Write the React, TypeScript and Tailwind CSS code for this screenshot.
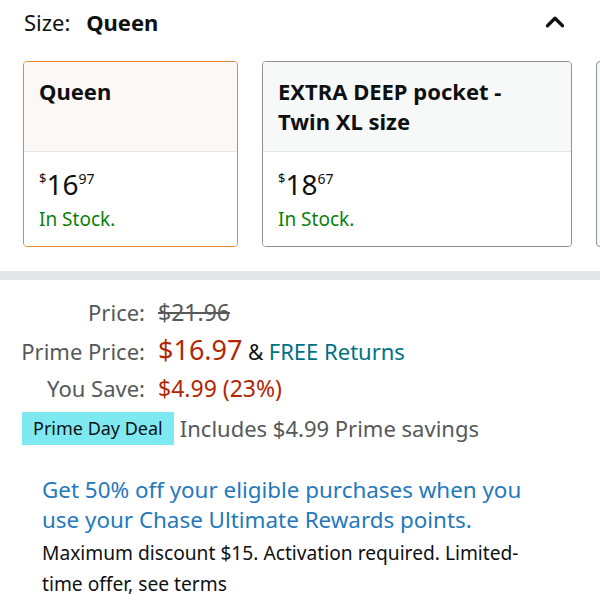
import { ChevronUp } from "lucide-react";

const font = { fontFamily: '"Noto Sans", "Open Sans", sans-serif' };

interface SizeOption {
  title: string;
  whole: string;
  cents: string;
  selected?: boolean;
}

const options: SizeOption[] = [
  { title: "Queen", whole: "16", cents: "97", selected: true },
  { title: "EXTRA DEEP pocket - Twin XL size", whole: "18", cents: "67" },
];

function SizeCard({ option }: { option: SizeOption }) {
  return (
    <div
      className={
        option.selected
          ? "shrink-0 w-[215px] h-[186px] rounded-[4px] border border-[#e8892f] overflow-hidden flex flex-col"
          : "shrink-0 w-[310px] h-[186px] rounded-[4px] border border-[#8d9096] overflow-hidden flex flex-col"
      }
    >
      <div
        className={
          option.selected
            ? "h-[90px] bg-[#fcf8f5] border-b border-[#e7e7e7] px-[15px] pt-[14px]"
            : "h-[90px] bg-[#f7f8f8] border-b border-[#e7e7e7] px-[15px] pt-[14px]"
        }
      >
        <div className="text-[22px] leading-[30px] font-bold text-[#0f1111]">
          {option.title}
        </div>
      </div>
      <div className="flex-1 bg-white px-[15px] pt-[14px]">
        <div className="flex items-start text-[#0f1111] h-[36px]">
          <span className="text-[13px] leading-none mt-[6px]">$</span>
          <span className="text-[28px] leading-[36px]">{option.whole}</span>
          <span className="text-[14px] leading-none mt-[6px]">
            {option.cents}
          </span>
        </div>
        <div className="text-[19px] leading-[28px] text-[#0a7f0a] mt-[3px]">
          In Stock.
        </div>
      </div>
    </div>
  );
}

export default function App() {
  return (
    <div className="w-[600px] h-[600px] bg-white overflow-hidden" style={font}>
      <div className="flex items-center justify-between pl-[24px] pr-[30px] h-[44px]">
        <div className="text-[22px] text-[#0f1111]">
          Size: <span className="font-bold ml-[10px]">Queen</span>
        </div>
        <ChevronUp size={30} strokeWidth={2.6} className="text-[#0f1111]" />
      </div>

      <div className="flex gap-[24px] pl-[23px] mt-[17px] overflow-hidden">
        {options.map((o) => (
          <SizeCard key={o.title} option={o} />
        ))}
        <div className="shrink-0 w-[200px] h-[186px] rounded-[4px] border border-[#8d9096] bg-[#f7f8f8]" />
      </div>

      <div className="h-[9px] bg-[#e3e6e6] mt-[24px]" />

      <div className="grid grid-cols-[145px_auto] gap-x-[13px] mt-[17px] text-[22px] text-[#565959] items-center">
        <div className="text-right leading-[30px]">Price:</div>
        <div className="leading-[30px] text-[23px] line-through">$21.96</div>

        <div className="text-right leading-[40px] mt-[3px]">Prime Price:</div>
        <div className="leading-[40px] mt-[3px] whitespace-nowrap">
          <span className="text-[27px] text-[#b12704]">$16.97</span>
          <span className="text-[#0f1111] text-[21px]"> &amp; </span>
          <span className="text-[#007185] text-[22px]">FREE Returns</span>
        </div>

        <div className="text-right leading-[32px]">You Save:</div>
        <div className="leading-[32px] text-[23px] text-[#b12704]">
          $4.99 (23%)
        </div>
      </div>

      <div className="flex items-center gap-[6px] pl-[22px] mt-[8px]">
        <div className="bg-[#7fe9f1] text-[#0f1111] text-[18px] leading-[33px] px-[11px]">
          Prime Day Deal
        </div>
        <div className="text-[22px] text-[#565959]">
          Includes $4.99 Prime savings
        </div>
      </div>

      <div className="ml-[42px] w-[486px] mt-[30px]">
        <div className="text-[22.4px] leading-[30px] text-[#2479bd]">
          Get 50% off your eligible purchases when you use your Chase Ultimate
          Rewards points.
        </div>
        <div className="text-[19.2px] leading-[31px] text-[#0f1111] mt-[2px]">
          Maximum discount $15. Activation required. Limited-time offer, see
          terms
        </div>
      </div>
    </div>
  );
}
